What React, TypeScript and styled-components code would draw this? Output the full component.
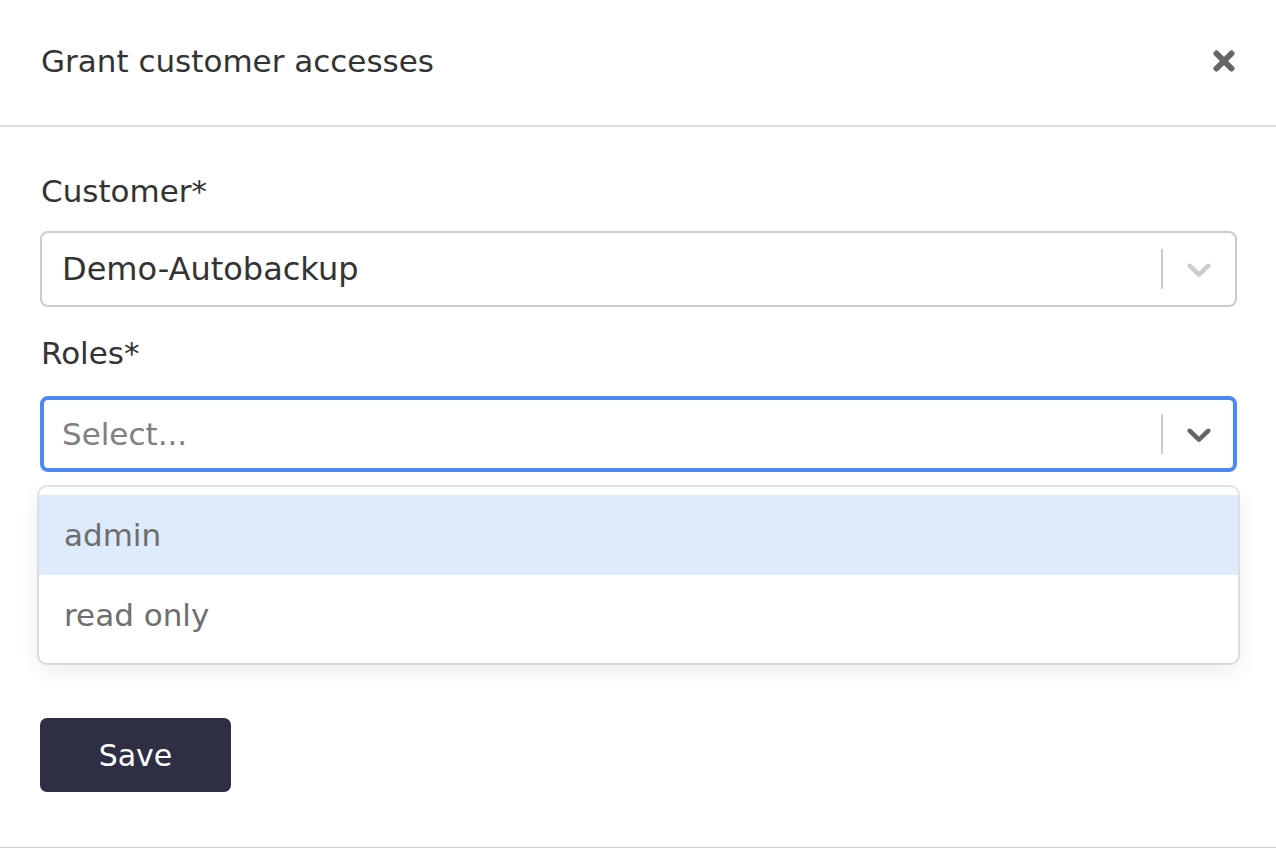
import React from "react";
import styled, { createGlobalStyle } from "styled-components";

const FONT = `"DejaVu Sans", "Open Sans", sans-serif`;

const Global = createGlobalStyle`
  html, body { margin: 0; padding: 0; background: #ffffff; }
  body { font-family: ${FONT}; }
  * { box-sizing: border-box; }
`;

const Modal = styled.div`
  width: 1276px;
  height: 848px;
  background: #fff;
  border-bottom: 1px solid #c9cdcd;
  display: flex;
  flex-direction: column;
`;

const Header = styled.div`
  height: 127px;
  border-bottom: 2px solid #dddddd;
  display: flex;
  align-items: center;
  justify-content: space-between;
  padding: 0 40px 4px 41px;
`;

const Title = styled.h4`
  margin: 0;
  font-size: 31px;
  font-weight: 400;
  color: #333333;
`;

const CloseButton = styled.button`
  border: 0;
  background: none;
  padding: 0;
  width: 24px;
  height: 24px;
  display: flex;
  align-items: center;
  justify-content: center;
  cursor: pointer;
`;

const Body = styled.div`
  padding: 44px 39px 0 40px;
  display: flex;
  flex-direction: column;
`;

const Label = styled.label<{ $top?: number; $bottom?: number }>`
  display: block;
  font-size: 31px;
  line-height: 40px;
  color: #333333;
  margin-top: ${(p) => p.$top ?? 0}px;
  margin-bottom: ${(p) => p.$bottom ?? 20}px;
  padding-left: 1px;
`;

const SelectWrap = styled.div`
  position: relative;
`;

const Control = styled.div<{ $focused?: boolean }>`
  height: 76px;
  border-radius: 8px;
  border: ${(p) => (p.$focused ? "4px solid #4a88f5" : "2px solid #cccccc")};
  display: flex;
  align-items: center;
  background: #fff;
`;

const Value = styled.div<{ $placeholder?: boolean; $focused?: boolean }>`
  flex: 1;
  padding-left: ${(p) => (p.$focused ? 18 : 20)}px;
  font-size: ${(p) => (p.$placeholder ? 31 : 32)}px;
  color: ${(p) => (p.$placeholder ? "#808080" : "#333333")};
`;

const Separator = styled.span`
  width: 2px;
  height: 40px;
  background: #cccccc;
`;

const Indicator = styled.div<{ $focused?: boolean }>`
  padding: 0 ${(p) => (p.$focused ? 14 : 16)}px 0 16px;
  display: flex;
  align-items: center;
  color: ${(p) => (p.$focused ? "#666666" : "#cccccc")};
`;

const Menu = styled.div`
  position: absolute;
  top: 91px;
  left: -1px;
  right: -1px;
  background: #fff;
  border-radius: 8px;
  padding: 8px 0;
  box-shadow: 0 0 0 2px rgba(0, 0, 0, 0.1), 0 8px 22px rgba(0, 0, 0, 0.08);
  z-index: 2;
`;

const Option = styled.div<{ $active?: boolean }>`
  height: 80px;
  display: flex;
  align-items: center;
  padding: 0 25px;
  font-size: 31px;
  color: #6e6e6e;
  background: ${(p) => (p.$active ? "#deebfd" : "transparent")};
`;

const SaveButton = styled.button`
  margin-top: 246px;
  width: 191px;
  height: 74px;
  border: 0;
  border-radius: 7px;
  background: #2e2e45;
  color: #ffffff;
  font-family: ${FONT};
  font-size: 30px;
  font-weight: 400;
  cursor: pointer;
`;

const Chevron = () => (
  <svg width="40" height="40" viewBox="0 0 20 20" fill="currentColor" aria-hidden="true">
    <path d="M4.516 7.548c0.436-0.446 1.043-0.481 1.576 0l3.908 3.747 3.908-3.747c0.533-0.481 1.141-0.446 1.574 0 0.436 0.445 0.408 1.197 0 1.615-0.406 0.418-4.695 4.502-4.695 4.502-0.217 0.223-0.502 0.335-0.787 0.335s-0.57-0.112-0.789-0.335c0 0-4.287-4.084-4.695-4.502s-0.436-1.17 0-1.615z" />
  </svg>
);

const CloseIcon = () => (
  <svg width="24" height="24" viewBox="0 0 24 24" aria-hidden="true">
    <path d="M4.5 4.5 L19.5 19.5 M19.5 4.5 L4.5 19.5" stroke="#666666" strokeWidth="6" strokeLinecap="round" />
  </svg>
);

export default function App() {
  return (
    <>
      <Global />
      <Modal>
        <Header>
          <Title>Grant customer accesses</Title>
          <CloseButton aria-label="Close">
            <CloseIcon />
          </CloseButton>
        </Header>
        <Body>
          <Label>Customer*</Label>
          <SelectWrap>
            <Control>
              <Value>Demo-Autobackup</Value>
              <Separator />
              <Indicator>
                <Chevron />
              </Indicator>
            </Control>
          </SelectWrap>
          <Label $top={26} $bottom={23}>Roles*</Label>
          <SelectWrap>
            <Control $focused>
              <Value $placeholder $focused>Select...</Value>
              <Separator />
              <Indicator $focused>
                <Chevron />
              </Indicator>
            </Control>
            <Menu>
              <Option $active>admin</Option>
              <Option>read only</Option>
            </Menu>
          </SelectWrap>
          <SaveButton>Save</SaveButton>
        </Body>
      </Modal>
    </>
  );
}
